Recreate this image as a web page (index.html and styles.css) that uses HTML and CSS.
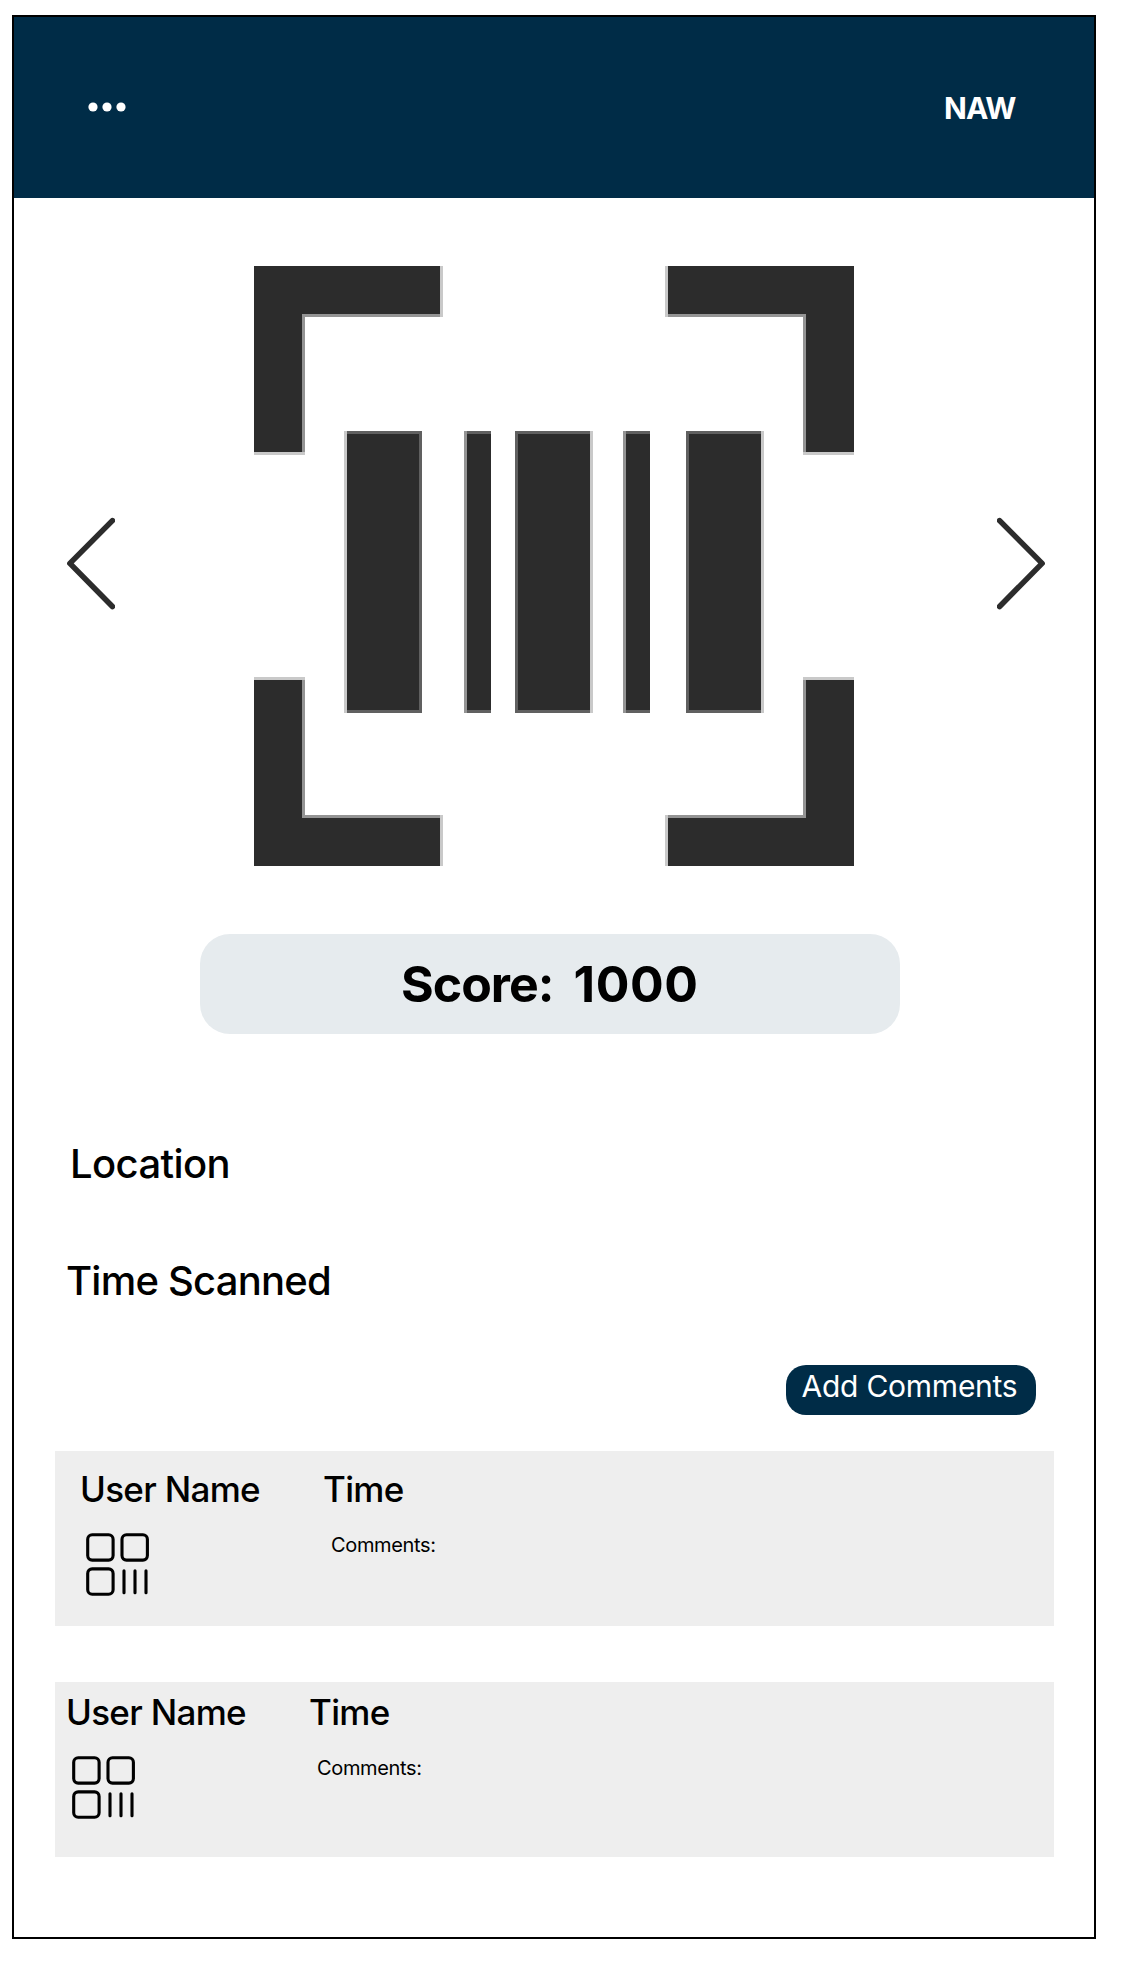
FILE: index.html
```html
<!DOCTYPE html>
<html lang="en">
<head>
<meta charset="utf-8">
<title>NAW</title>
<link rel="stylesheet" href="styles.css">
</head>
<body>
<svg class="symbols" width="0" height="0" aria-hidden="true">
  <symbol id="grid-icon" viewBox="0 0 64 64">
    <g fill="none" stroke="#000" stroke-width="3.1" stroke-linecap="round">
      <rect x="1.7" y="1.7" width="25.4" height="25.4" rx="4.5"/>
      <rect x="36" y="1.7" width="25.4" height="25.4" rx="4.5"/>
      <rect x="1.7" y="35.9" width="25.4" height="25.4" rx="4.5"/>
      <path d="M38 37.8V59.8M49 37.8V59.8M60 37.8V59.8"/>
    </g>
  </symbol>
</svg>
<div class="screen">
  <header class="topbar">
    <svg class="menu" width="38" height="12" viewBox="0 0 38 12" fill="#fff"><circle cx="5" cy="6" r="4.6"/><circle cx="19" cy="6" r="4.6"/><circle cx="33" cy="6" r="4.6"/></svg>
    <span class="brand">NAW</span>
  </header>
  <section class="viewer">
    <svg class="arrow" width="50" height="94" viewBox="0 0 50 94"><path d="M47.4 4.6L4.9 47.4L47.4 90.5"/></svg>
    <svg class="barcode" width="600" height="600" viewBox="254 266 600 600" shape-rendering="crispEdges">
      <defs>
        <g id="corner">
          <path fill="#2c2c2c" d="M254 266H440V314H302V452H254Z"/>
          <path fill="#949494" d="M302 314H440V317H305V452H302Z"/>
          <path fill="#c9c9c9" d="M440 266H443V317H440ZM254 452H305V455H254Z"/>
        </g>
      </defs>
      <use href="#corner"/>
      <use href="#corner" transform="matrix(-1 0 0 1 1108 0)"/>
      <use href="#corner" transform="matrix(1 0 0 -1 0 1132)"/>
      <use href="#corner" transform="matrix(-1 0 0 -1 1108 1132)"/>
      <path fill="#606060" d="M347 431H422V713H347ZM467 431H491V713H467ZM515 431H590V713H515ZM626 431H650V713H626ZM686 431H761V713H686Z"/>
      <path fill="#2c2c2c" d="M347 434H419V710H347ZM467 434H491V710H467ZM518 434H590V710H518ZM626 434H650V710H626ZM689 434H761V710H689Z"/>
      <path fill="#c9c9c9" d="M344 431H347V713H344ZM590 431H593V713H590ZM761 431H764V713H761Z"/>
      <path fill="#949494" d="M464 431H467V713H464ZM623 431H626V713H623Z"/>
    </svg>
    <svg class="arrow" width="50" height="94" viewBox="0 0 50 94"><path d="M2.6 4.6L45.1 47.4L2.6 90.5"/></svg>
  </section>
  <div class="score">Score:  <span class="points">1000</span></div>
  <p class="detail location">Location</p>
  <p class="detail scanned">Time Scanned</p>
  <button class="add">Add Comments</button>
  <article class="card first">
    <h2>User Name</h2><h2>Time</h2>
    <svg class="avatar" width="64" height="64"><use href="#grid-icon"/></svg>
    <p class="comment">Comments:</p>
  </article>
  <article class="card second">
    <h2>User Name</h2><h2>Time</h2>
    <svg class="avatar" width="64" height="64"><use href="#grid-icon"/></svg>
    <p class="comment">Comments:</p>
  </article>
</div>
</body>
</html>
```
FILE: styles.css
```css
* { box-sizing: border-box; }
body { margin: 0; padding: 15px 25px 28px 12px; background: #fff; color: #000; font-family: Inter, sans-serif; }
h2, p { margin: 0; }
.symbols { display: none; }
.screen { width: 1084px; height: 1924px; border: 2px solid #000; display: flex; flex-direction: column; }
.topbar { height: 181px; background: #002c47; display: flex; justify-content: space-between; align-items: center; padding: 0 78.5px 1px 74px; color: #fff; }
.menu { display: block; }
.brand { font-size: 30px; font-weight: 700; line-height: 36px; letter-spacing: -0.9px; margin-top: 1px; }
.viewer { display: flex; align-items: flex-start; padding: 68px 47px 0 51px; }
.arrow { margin-top: 250px; fill: none; stroke: #2c2c2c; stroke-width: 5.6; stroke-linecap: round; stroke-linejoin: round; }
.barcode { display: block; margin: 0 143px 0 139px; }
.score { width: 700px; height: 100px; margin: 68px 0 0 186px; padding-left: 201px; border-radius: 30px; background: #e6ebee; font-size: 50px; font-weight: 700; line-height: 100px; letter-spacing: -1px; word-spacing: -0.8px; white-space: pre; }
.points { letter-spacing: 0.6px; }
.detail { font-size: 40px; font-weight: 450; line-height: 48px; letter-spacing: -0.6px; }
.location { margin: 106px 0 0 56px; }
.scanned { margin: 69px 0 0 52px; letter-spacing: -0.78px; }
.add { align-self: flex-end; margin: 60px 58px 36px 0; width: 250px; height: 50px; padding: 0 3px 8px 0; border: 0; border-radius: 20px; background: #002c47; color: #fff; font: 400 30px/36px Inter, sans-serif; letter-spacing: -0.25px; white-space: nowrap; }
.card { width: 999px; height: 175px; margin-left: 41px; background: #eee; display: grid; grid-template-columns: 243px 1fr; grid-template-rows: 44px 64px; row-gap: 22px; }
.card h2 { font-size: 35px; font-weight: 450; line-height: 44px; letter-spacing: -0.7px; }
.first { padding: 16px 0 0 25px; }
.second { margin-top: 56px; padding: 8px 0 0 11px; }
.avatar { margin-left: 6px; }
.comment { font-size: 20px; line-height: 24px; letter-spacing: -0.35px; margin-left: 8px; }
```
